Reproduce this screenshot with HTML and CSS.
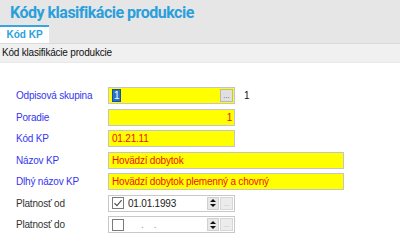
FILE: index.html
```html
<!DOCTYPE html>
<html lang="sk">
<head>
<meta charset="utf-8">
<title>Kódy klasifikácie produkcie</title>
<link rel="stylesheet" href="styles.css">
</head>
<body>
<div class="page">
  <header class="titlebar">
    <h1 class="title">Kódy klasifikácie produkcie</h1>
    <nav class="tabs">
      <div class="tab active">Kód KP</div>
    </nav>
  </header>
  <div class="subheader">Kód klasifikácie produkcie</div>
  <form class="form">
    <div class="row">
      <label class="label blue">Odpisová skupina</label>
      <div class="field yellow short lookup">
        <span class="sel">1</span>
        <span class="dots-btn">...</span>
      </div>
      <span class="after">1</span>
    </div>
    <div class="row">
      <label class="label blue">Poradie</label>
      <div class="field yellow short right"><span class="val">1</span></div>
    </div>
    <div class="row">
      <label class="label blue">Kód KP</label>
      <div class="field yellow short"><span class="val">01.21.11</span></div>
    </div>
    <div class="row">
      <label class="label blue">Názov KP</label>
      <div class="field yellow wide"><span class="val">Hovädzí dobytok</span></div>
    </div>
    <div class="row">
      <label class="label blue">Dlhý názov KP</label>
      <div class="field yellow wide"><span class="val">Hovädzí dobytok plemenný a chovný</span></div>
    </div>
    <div class="row">
      <label class="label">Platnosť od</label>
      <div class="field date short">
        <span class="check checked">
          <svg width="10" height="10" viewBox="0 0 10 10"><path d="M1.5 5.2 L4 7.6 L8.6 2.2" fill="none" stroke="#555" stroke-width="1.2"/></svg>
        </span>
        <span class="dateval">01.01.1993</span>
        <span class="spin"><span class="up"></span><span class="down"></span></span>
        <span class="dots-btn disabled">...</span>
      </div>
    </div>
    <div class="row">
      <label class="label">Platnosť do</label>
      <div class="field date short">
        <span class="check"></span>
        <span class="dateval empty">&nbsp;&nbsp;&nbsp;&nbsp;&nbsp;.&nbsp;&nbsp;&nbsp;&nbsp;.</span>
        <span class="spin"><span class="up"></span><span class="down"></span></span>
        <span class="dots-btn disabled">...</span>
      </div>
    </div>
  </form>
</div>
</body>
</html>
```
FILE: styles.css
```css
html, body {
  margin: 0;
  padding: 0;
  background: #ffffff;
}
body {
  font-family: "Liberation Sans", Arial, sans-serif;
  font-size: 10px;
  letter-spacing: -0.2px;
  color: #222;
}
.page {
  width: 400px;
  height: 245px;
  overflow: hidden;
}
.titlebar {
  background: #e6e6e6;
  height: 43px;
  display: flex;
  flex-direction: column;
  justify-content: space-between;
}
.title {
  margin: 0;
  padding: 3px 0 0 10px;
  font-family: Roboto, "Liberation Sans", sans-serif;
  font-weight: 700;
  font-size: 16px;
  line-height: 20px;
  letter-spacing: -0.5px;
  color: #2a9fdc;
  white-space: nowrap;
}
.tabs {
  display: flex;
  height: 18px;
}
.tab {
  width: 49px;
  box-sizing: border-box;
  border-top: 2px solid #35a6e2;
  background: #ffffff;
  color: #2a9fdc;
  font-weight: 700;
  font-size: 10px;
  letter-spacing: 0;
  line-height: 15px;
  text-align: center;
}
.subheader {
  background: #f0f0f0;
  height: 18px;
  line-height: 17px;
  padding-left: 2px;
  border-top: 1px solid #d9d9d9;
  border-bottom: 1px solid #e8e8e8;
  color: #111;
}
.form {
  padding: 24px 0 0 16px;
  display: flex;
  flex-direction: column;
  gap: 4.5px;
}
.row {
  display: flex;
  align-items: center;
  height: 17px;
}
.label {
  width: 92px;
  flex: none;
  color: #333;
}
.label.blue {
  color: #3535f0;
}
.field {
  box-sizing: border-box;
  height: 17px;
  border: 1px solid #c4c4c4;
  display: flex;
  align-items: center;
  padding: 0 2px 0 3px;
  flex: none;
}
.field.yellow {
  background: #ffff00;
  color: #ee1111;
}
.field.short { width: 127px; }
.field.wide { width: 236px; }
.field.right { justify-content: flex-end; }
.field.lookup { padding-right: 1px; justify-content: space-between; }
.sel {
  background: #2a74c8;
  color: #ffffff;
  border: 1px solid #1a4f9a;
  line-height: 11px;
  padding: 0 1px;
}
.dots-btn {
  box-sizing: border-box;
  width: 13px;
  height: 13px;
  background: #e0e0e0;
  border: 1px solid #b8b8b8;
  color: #666;
  font-size: 8px;
  letter-spacing: 0;
  line-height: 11px;
  text-align: center;
}
.dots-btn.disabled {
  background: #ececec;
  border-color: #d6d6d6;
  color: #bbb;
}
.after {
  margin-left: 9px;
  color: #111;
}
.field.date {
  background: #ffffff;
  border-color: #c8c8c8;
  padding: 0 1px 0 3px;
  color: #222;
}
.check {
  box-sizing: border-box;
  width: 12px;
  height: 12px;
  border: 1px solid #7a7a7a;
  background: #fff;
  display: flex;
  align-items: center;
  justify-content: center;
  flex: none;
}
.dateval {
  margin-left: 4px;
  flex: 1;
}
.dateval.empty {
  color: #999;
}
.spin {
  width: 12px;
  height: 13px;
  background: #e8e8e8;
  border: 1px solid #d0d0d0;
  box-sizing: border-box;
  display: flex;
  flex-direction: column;
  align-items: center;
  justify-content: center;
  gap: 2px;
  margin-right: 1px;
}
.spin .up, .spin .down {
  width: 0;
  height: 0;
  border-left: 3px solid transparent;
  border-right: 3px solid transparent;
}
.spin .up { border-bottom: 3px solid #111; }
.spin .down { border-top: 3px solid #111; }
```
